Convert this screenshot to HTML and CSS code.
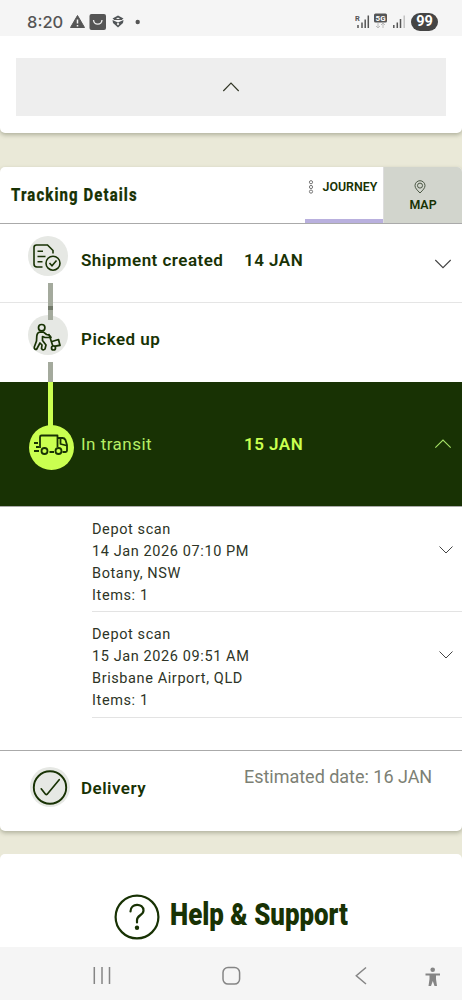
FILE: index.html
```html
<!DOCTYPE html>
<html lang="en">
<head>
<meta charset="utf-8">
<title>Tracking Details</title>
<link rel="stylesheet" href="styles.css">
</head>
<body>
<div class="screen">
  <header class="status">
    <span class="clock">8:20</span>
    <svg class="status-left" width="74" height="20" viewBox="69 12 74 20">
      <path d="M77.500 15.500L84.500 27.500H70.500Z" fill="#555" stroke="#555" stroke-linejoin="round"/>
      <path d="M77.500 19.500V23.500M77.500 25V26.500" stroke="#f5f5f5" stroke-width="1.500"/>
      <rect x="89.500" y="14" width="16.500" height="16" rx="2" fill="#555"/>
      <path d="M93.500 20C94 25.500 101.500 25.500 102 20" fill="none" stroke="#eee" stroke-width="1.300"/>
      <path d="M112.500 18.500L118 15.500L123.500 18.500L121.500 20L118 17.500L114.500 20ZM112.500 20L118 22.500L123.500 20L123 23L118 27.500L113 23Z" fill="#505558"/>
      <path d="M114 19.500H122M115.500 24H120.500" stroke="#555" stroke-width="1"/>
      <circle cx="118" cy="24" r="1.200" fill="#ddd"/>
      <circle cx="137.700" cy="22" r="2.200" fill="#555"/>
    </svg>
    <svg class="status-right" width="50" height="20" viewBox="355 12 50 20">
      <path d="M358 25V28M362 22.500V28M365.200 19.500V28M368.300 15.500V28" stroke="#555" stroke-width="1.500" fill="none"/>
      <text class="roam" x="355" y="20.500">R</text>
      <rect x="374" y="13.500" width="13" height="9" rx="1.500" fill="#555"/>
      <text class="fiveg" x="375.600" y="20.900">5G</text>
      <path d="M378 23V28M376 26L378 28L380 26M383 28V23M381 25L383 23L385 25" fill="none" stroke="#bbb"/>
      <path d="M393.800 25V28M397.300 22.500V28M400.500 19V28" stroke="#555" stroke-width="1.500"/>
      <path d="M404.200 15.500V28" stroke="#bbb" stroke-width="1.300"/>
    </svg>
    <span class="battery">99</span>
  </header>

  <section class="card summary">
    <div class="collapse">
      <svg width="18" height="12" viewBox="0 0 18 12"><path d="M1.300 10L9 2L16.700 10" fill="none" stroke="#303524" stroke-width="1.100"/></svg>
    </div>
  </section>

  <section class="card tracking">
    <div class="card-head">
      <h2><span>Tracking Details</span></h2>
      <div class="tab active">
        <svg width="6" height="14" viewBox="0 0 6 14" fill="none" stroke="#666" stroke-width=".9"><circle cx="3" cy="2.200" r="1.600"/><circle cx="3" cy="7" r="1.600"/><circle cx="3" cy="11.600" r="1.600"/></svg>
        <span>JOURNEY</span>
      </div>
      <div class="tab map">
        <svg width="12" height="14" viewBox="0 0 12 14" fill="none" stroke="#4a5743" stroke-width="1"><path d="M6 13C3 10 1 8 1 5.700A5 5 0 0 1 11 5.700C11 8 9 10 6 13Z"/><circle cx="6" cy="5.600" r="2.500"/></svg>
        <span>MAP</span>
      </div>
    </div>

    <div class="stage created">
      <svg class="icon" width="40" height="40" viewBox="0 0 40 40" fill="none" stroke="#183204" stroke-width="1.600">
        <circle cx="20" cy="20" r="20" fill="#e6e8e4" stroke="none"/>
        <path d="M14.500 31H9Q6 31 6 28V11.500Q6 9 8.500 9H19.500L25 14.500V17.500M9.500 15.200H15M9.500 20.500H17.500M9.500 25.700H14.500"/>
        <circle cx="25" cy="27.200" r="7"/><path d="M21.500 27L24 29.700L28.500 24.500"/>
      </svg>
      <strong class="name">Shipment created</strong>
      <strong class="date">14 JAN</strong>
      <svg class="chev" width="18" height="12" viewBox="0 0 18 12"><path d="M1.300 2L9 9.700L16.700 2" fill="none" stroke="#444" stroke-width="1.100"/></svg>
      <i class="link first"></i>
    </div>

    <div class="stage picked">
      <svg class="icon" width="40" height="40" viewBox="0 0 40 40" fill="none" stroke="#183204" stroke-width="1.700" stroke-linejoin="round" stroke-linecap="round">
        <circle cx="20" cy="20" r="20" fill="#e6e8e4" stroke="none"/>
        <path d="M20 0H25V5H20Z" fill="#a4aa9d" stroke="none"/>
        <circle cx="13.700" cy="12.700" r="3.200"/>
        <path d="M12 17Q9 17.500 8.800 21L8.500 26L6.300 32Q6 34.500 8.500 34.500L12 28L14 30L13.500 33.500Q15 36 17 34L18 30L14.500 25.500V21.500L17 22.500H23Q22 19.700 18.500 19.500L15.500 17.200ZM21 19.500L25 31.500L32 30M24 26.500L30.500 24.500L32 30.500L26 31.500"/>
        <circle cx="25.500" cy="33" r="2" fill="#e6e8e4"/>
      </svg>
      <strong class="name">Picked up</strong>
      <i class="link upper"></i>
      <i class="link lower"></i>
    </div>

    <div class="stage transit">
      <svg class="icon" width="45" height="45" viewBox="0 0 45 45" fill="none" stroke="#183204" stroke-width="1.800" stroke-linejoin="round">
        <circle cx="22.500" cy="22.500" r="22.500" fill="#caff50" stroke="none"/>
        <path d="M11 23V12Q11 10.500 12.500 10.500H28.500V22M20.500 27H25M28.500 13H33.500Q35.500 13 36.500 15L38 20V25.500Q38 27 36.500 27H33.500M31.500 13V19L37.500 20.500M5 18H9M7 22H10M5 26H10"/>
        <circle cx="15.500" cy="26" r="3"/><circle cx="29.500" cy="26" r="3"/>
      </svg>
      <span class="name">In transit</span>
      <strong class="date">15 JAN</strong>
      <svg class="chev" width="18" height="12" viewBox="0 0 18 12"><path d="M1.300 9.700L9 2L16.700 9.700" fill="none" stroke="#a6e267" stroke-width="1.100"/></svg>
      <i class="link lime"></i>
    </div>

    <div class="scans">
      <div class="scan">
        <div><p>Depot scan</p><p>14 Jan 2026 07:10 PM</p><p>Botany, NSW</p><p>Items: 1</p></div>
        <svg width="16" height="10" viewBox="0 0 16 10"><path d="M1.500 1.500L8 8L14.500 1.500" fill="none" stroke="#444" stroke-width="1"/></svg>
      </div>
      <div class="scan">
        <div><p>Depot scan</p><p>15 Jan 2026 09:51 AM</p><p>Brisbane Airport, QLD</p><p>Items: 1</p></div>
        <svg width="16" height="10" viewBox="0 0 16 10"><path d="M1.500 1.500L8 8L14.500 1.500" fill="none" stroke="#444" stroke-width="1"/></svg>
      </div>
    </div>

    <div class="stage delivery">
      <svg class="icon" width="40" height="40" viewBox="0 0 40 40" fill="none" stroke="#183204" stroke-width="1.900">
        <circle cx="20" cy="20" r="20" fill="#e6e8e4" stroke="none"/>
        <circle cx="20" cy="20.500" r="16.200"/>
        <path d="M11.200 21.800L15.500 27.200Q16.400 28 17.200 27.200L29.200 12.700" stroke-linecap="round" stroke-width="1.700"/>
      </svg>
      <strong class="name">Delivery</strong>
      <span class="estimate">Estimated date: 16 JAN</span>
    </div>
  </section>

  <section class="card help">
    <svg width="46" height="46" viewBox="0 0 46 46" fill="none" stroke="#183204" stroke-width="2.200">
      <circle cx="23" cy="23" r="21.400"/>
      <path d="M16.500 17.500C16.500 8.500 29.500 9 29.500 16.500C29.500 21.500 23 21 23 26V28.500" stroke-linecap="round"/>
      <circle cx="23" cy="33.700" r="2.200" fill="#183204" stroke="none"/>
    </svg>
    <h2><span>Help &amp; Support</span></h2>
  </section>

  <nav class="navbar">
    <svg width="462" height="53" viewBox="0 947 462 53" fill="none" stroke="#858585" stroke-width="1.500">
      <path d="M94.300 967V984M102 967V984M109.500 967V984"/>
      <rect x="223" y="967.500" width="16.600" height="16.600" rx="5"/>
      <path d="M366 967.500L356.300 975.800L366 984"/>
      <circle cx="432.700" cy="969.800" r="2.300" fill="#858585" stroke="none"/>
      <path d="M425.500 974.500H440" stroke-width="2"/>
      <path d="M429.500 974.500H436V979L437 986H434.500L432.800 981L431 986H428.500L429.500 979Z" fill="#858585" stroke="none"/>
    </svg>
  </nav>
</div>
</body>
</html>
```
FILE: styles.css
```css
* { box-sizing: border-box; }
body { margin: 0; font-family: Roboto, sans-serif; color: #183204; }
h2, p { margin: 0; }
svg { display: block; flex: none; }

.screen { width: 462px; height: 1000px; overflow: hidden; background: #eae9d8; display: flex; flex-direction: column; }

.status { height: 36px; background: #f5f5f5; display: flex; align-items: center; padding: 8px 24px 0 27px; flex: none; }
.clock { font-family: Inter, sans-serif; font-size: 16.500px; font-weight: 500; color: #555; width: 42px; white-space: nowrap; line-height: 20px; }
.status-right { margin-left: auto; }
.roam { font: 700 7.500px Roboto, sans-serif; fill: #555; }
.fiveg { font: 700 8px Roboto, sans-serif; fill: #fff; }
.battery { width: 27px; height: 18px; margin-left: 6px; border-radius: 9px; background: #454545; color: #fff; font: 700 14.500px/18px Roboto, sans-serif; text-align: center; }

.card { background: #fff; border-radius: 5px; box-shadow: 0 2px 4px rgba(70, 75, 45, .35); flex: none; }
.summary { height: 97px; border-radius: 0 0 5px 5px; padding: 22px 16px 0 16px; clip-path: inset(0 0 -10px 0); }
.collapse { height: 58px; background: #eee; display: flex; align-items: center; justify-content: center; }

.tracking { margin-top: 34px; height: 664px; }
.card-head { height: 57px; border-bottom: 1px solid #aaa; display: flex; }
.card-head h2 { flex: 1; padding-left: 11px; font-size: 19px; line-height: 55px; font-weight: 800; white-space: nowrap; }
.card-head h2 span { display: inline-block; transform-origin: left; transform: scaleX(.785); letter-spacing: 1.400px; -webkit-text-stroke: .2px #183204; }
.tab { width: 78px; font-size: 12.400px; font-weight: 600; }
.tab.active { display: flex; border-bottom: 4px solid #b9b0de; padding: 13px 0 0 3px; line-height: 14px; gap: 8.500px; }
.map { width: 79px; background: #d2d5cd; border-radius: 0 5px 0 0; padding-top: 13px; display: flex; flex-direction: column; align-items: center; border-left: 1px solid #ddd; gap: 3px; line-height: 15px; }
.map svg { margin-right: 6px; }

.stage { position: relative; display: grid; grid-template-columns: 81px 163px 191px 1fr; align-items: start; font-size: 17px; line-height: 20px; letter-spacing: .48px; white-space: nowrap; }
.stage strong { font-weight: 600; }
.stage .name { grid-column: 2; grid-row: 1; }
.stage .date { grid-column: 3; grid-row: 1; }
.stage .icon { grid-column: 1; grid-row: 1; margin-left: 28px; position: relative; z-index: 2; }
.stage .chev { grid-column: 4; grid-row: 1; margin-left: -1px; }
.created { height: 79px; padding-top: 12px; border-bottom: 1px solid #e5e5e5; }
.created .name, .created .date { margin-top: 14px; }
.created .chev { margin-top: 22px; }
.picked { height: 79px; padding-top: 12px; }
.picked .name { margin-top: 14px; }
.transit { height: 125px; background: #183204; color: #caff50; border-bottom: 1px solid #aaa; padding-top: 43px; }
.transit .icon { margin-left: 29px; }
.transit .name, .transit .date { margin-top: 9px; }
.transit .name { color: #b6ed65; }
.transit .chev { margin-top: 13px; }

/* Connectors that run across the row borders */
.link { position: absolute; left: 48px; width: 5px; z-index: 1; background: #a4aa9d; }
.first { top: 59px; height: 27px; }
.upper { top: 3px; height: 14px; border-top: 4px solid #747b6c; }
.lower { top: 59px; height: 20px; }
.lime { top: 0; height: 45px; background: #caff50; }

.scans { height: 244px; border-bottom: 1px solid #aaa; padding-left: 92px; font-size: 14.500px; line-height: 22px; letter-spacing: .6px; color: #2d3426; }
.scan { height: 105px; border-bottom: 1px solid #e3e3e3; padding: 12px 8px 0 0; display: flex; justify-content: space-between; }
.scan + .scan { height: 106px; }
.scan svg { margin-top: 26px; }

.delivery { padding-top: 16px; grid-template-columns: 81px 163px 1fr; }
.delivery .icon { margin-left: 30px; }
.delivery .name { margin-top: 11px; }
.estimate { grid-column: 3; grid-row: 1; color: #7c8074; font-size: 18px; letter-spacing: -.02px; }

.help { margin-top: 23px; height: 93px; border-radius: 5px 5px 0 0; box-shadow: none; padding: 40px 0 0 114px; display: flex; gap: 10px; }
.help h2 { font-size: 31.500px; line-height: 41px; font-weight: 900; white-space: nowrap; }
.help h2 span { display: inline-block; transform-origin: left; transform: scaleX(.82); }
.navbar { height: 53px; background: #f5f5f5; flex: none; }
```
